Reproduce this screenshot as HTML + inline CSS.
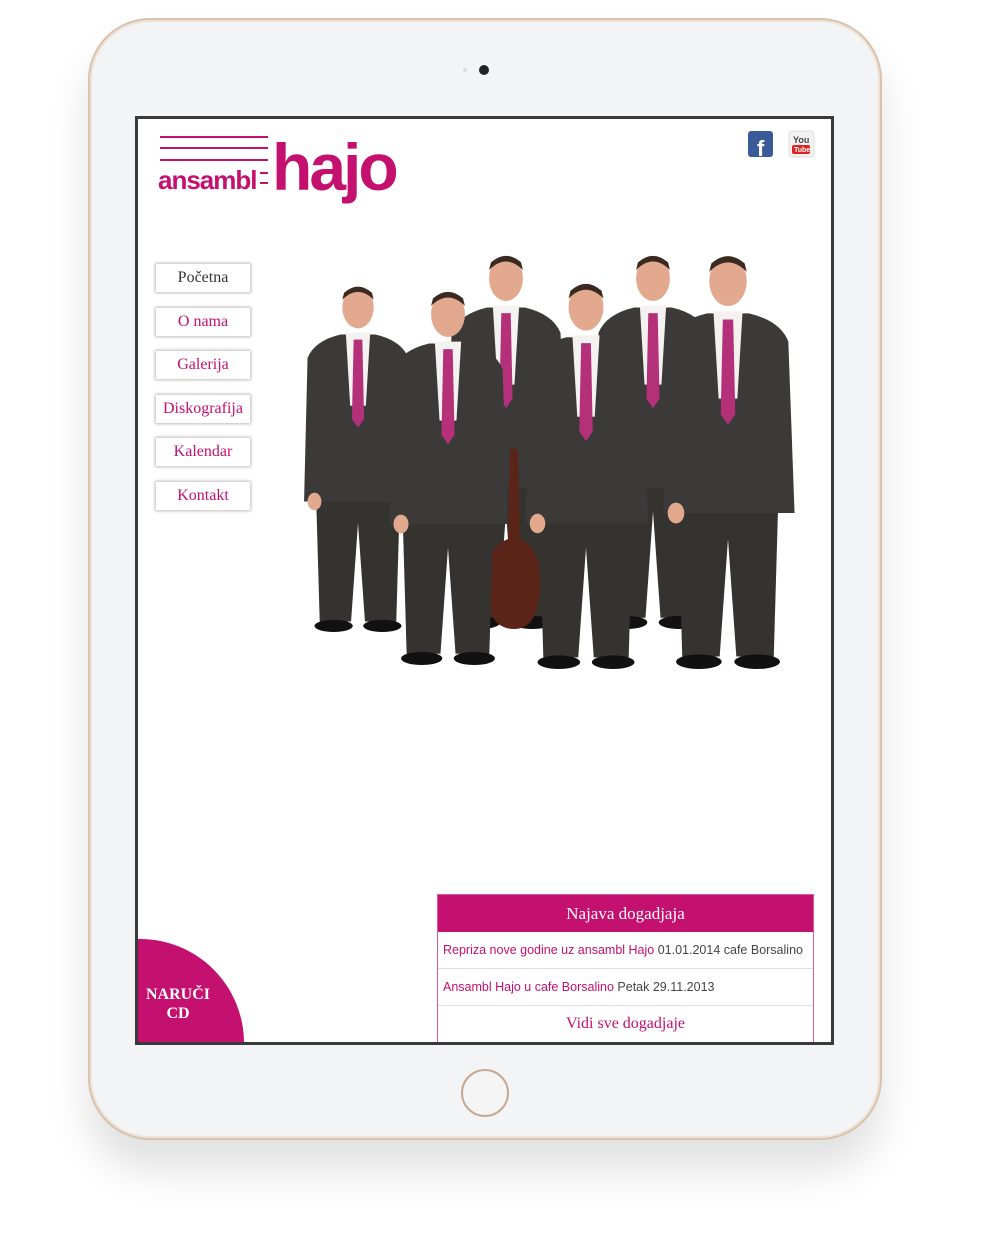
<!DOCTYPE html>
<html><head><meta charset="utf-8"><style>
body{margin:0;width:984px;height:1260px;background:#fff;position:relative;overflow:hidden;font-family:"Liberation Sans",sans-serif}
.ipad{position:absolute;left:88px;top:18px;width:790px;height:1118px;border-radius:62px;background:#f3f4f6;border:2px solid #d9c2ad;box-shadow:0 30px 40px rgba(0,0,0,.12),inset 0 0 0 2px #efe3d8}
.screen{position:absolute;left:135px;top:116px;width:693px;height:923px;border:3px solid #3a3a3a;background:#fff;overflow:hidden}
.nav{position:absolute;left:18px;width:94px;height:28px;background:#fff;box-shadow:0 0 3px 1px #bbb;font-family:"Liberation Serif",serif;font-size:16px;text-align:center;line-height:28px;color:#c4106e}
.ev{position:absolute;left:299px;top:775px;width:375px;border:1px solid #d35a98;border-bottom:none}
.ev .h{background:#c4106e;color:#fff;font-family:"Liberation Serif",serif;font-size:17px;text-align:center;height:37px;line-height:37px}
.ev .r{height:36px;line-height:36px;border-bottom:1px solid #ddd;font-size:12.5px;color:#444;padding-left:5px;white-space:nowrap}
.ev .r a{color:#c4106e}
</style></head><body>
<div class="ipad"></div>
<div style="position:absolute;left:463px;top:68px;width:4px;height:4px;border-radius:50%;background:#ddd"></div>
<div style="position:absolute;left:479px;top:65px;width:10px;height:10px;border-radius:50%;background:#222"></div>
<div style="position:absolute;left:461px;top:1069px;width:44px;height:44px;border-radius:50%;border:2px solid #c8a890;background:#f5f5f6"></div>
<div class="screen">
 <svg style="position:absolute;left:0;top:0" width="693" height="923">
  <g fill="#c4106e">
   <rect x="22" y="17" width="108" height="2"/><rect x="22" y="28" width="108" height="2"/><rect x="22" y="40" width="108" height="2"/>
   <rect x="122" y="53" width="8" height="2"/><rect x="122" y="63" width="8" height="2"/>
  </g>
  <text x="20" y="70" fill="#c4106e" font-family="Liberation Sans" font-size="26" font-weight="bold" letter-spacing="-1">ansambl</text>
  <text x="134" y="71" fill="#c4106e" font-family="Liberation Sans" font-size="66" font-weight="bold" letter-spacing="-3">hajo</text>
  <rect x="610" y="12" width="25" height="26" rx="3" fill="#3b5a9a"/>
  <text x="619" y="37" fill="#fff" font-family="Liberation Sans" font-size="22" font-weight="bold">f</text>
  <rect x="651" y="12" width="25" height="26" rx="3" fill="#f1f1f1" stroke="#ddd"/>
  <text x="655" y="24" fill="#444" font-size="9" font-weight="bold">You</text>
  <rect x="654" y="26" width="18" height="9" rx="2" fill="#d22"/>
  <text x="656" y="33" fill="#fff" font-size="7" font-weight="bold">Tube</text>
  <defs>
   <g id="f">
    <ellipse cx="0" cy="27" rx="18" ry="24" fill="#e2a98f"/>
    <path d="M-18 18 Q0 0 18 18 L16 10 Q0 -4 -16 10Z" fill="#3a2a22"/>
    <path d="M-58 85 Q-50 65 -20 58 L20 58 Q50 65 58 85 L64 250 L-62 250Z" fill="#3c3a38"/>
    <path d="M-14 56 L14 56 L9 140 L-9 140Z" fill="#f4f2f0"/>
    <path d="M-5 64 L5 64 L7 155 L0 165 L-7 155Z" fill="#b4317a"/>
    <path d="M-48 250 L48 250 L44 388 L8 388 L0 275 L-8 388 L-44 388Z" fill="#35332f"/>
    <ellipse cx="-28" cy="393" rx="22" ry="7" fill="#111"/>
    <ellipse cx="28" cy="393" rx="22" ry="7" fill="#111"/>
    <ellipse cx="-50" cy="250" rx="8" ry="10" fill="#e2a98f"/>
   </g>
  </defs>
  <use href="#f" transform="translate(368,134) scale(0.94)"/>
  <use href="#f" transform="translate(515,134) scale(0.94)"/>
  <path d="M372 330 L380 330 L382 420 Q405 430 402 470 Q400 510 376 510 Q350 510 348 470 Q346 430 370 420Z" fill="#5a2418"/>
  <use href="#f" transform="translate(220,165) scale(0.87)"/>
  <use href="#f" transform="translate(590,134) scale(1.04)"/>
  <use href="#f" transform="translate(310,170) scale(0.94)"/>
  <use href="#f" transform="translate(448,162) scale(0.97)"/>
  <circle cx="2" cy="924" r="104" fill="#c4106e"/>
  <text x="40" y="880" fill="#fff" font-family="Liberation Serif" font-size="16" font-weight="bold" text-anchor="middle">NARUČI</text>
  <text x="40" y="899" fill="#fff" font-family="Liberation Serif" font-size="16" font-weight="bold" text-anchor="middle">CD</text>
 </svg>
 <div class="nav" style="top:145px;color:#333">Početna</div>
 <div class="nav" style="top:189px">O nama</div>
 <div class="nav" style="top:232px">Galerija</div>
 <div class="nav" style="top:276px">Diskografija</div>
 <div class="nav" style="top:319px">Kalendar</div>
 <div class="nav" style="top:363px">Kontakt</div>
 <div class="ev">
  <div class="h">Najava dogadjaja</div>
  <div class="r"><a>Repriza nove godine uz ansambl Hajo</a> 01.01.2014 cafe Borsalino</div>
  <div class="r"><a>Ansambl Hajo u cafe Borsalino</a> Petak 29.11.2013</div>
  <div class="r" style="text-align:center;font-family:'Liberation Serif',serif;font-size:16px;color:#c4106e;padding:0">Vidi sve dogadjaje</div>
 </div>
</div>
</body></html>
